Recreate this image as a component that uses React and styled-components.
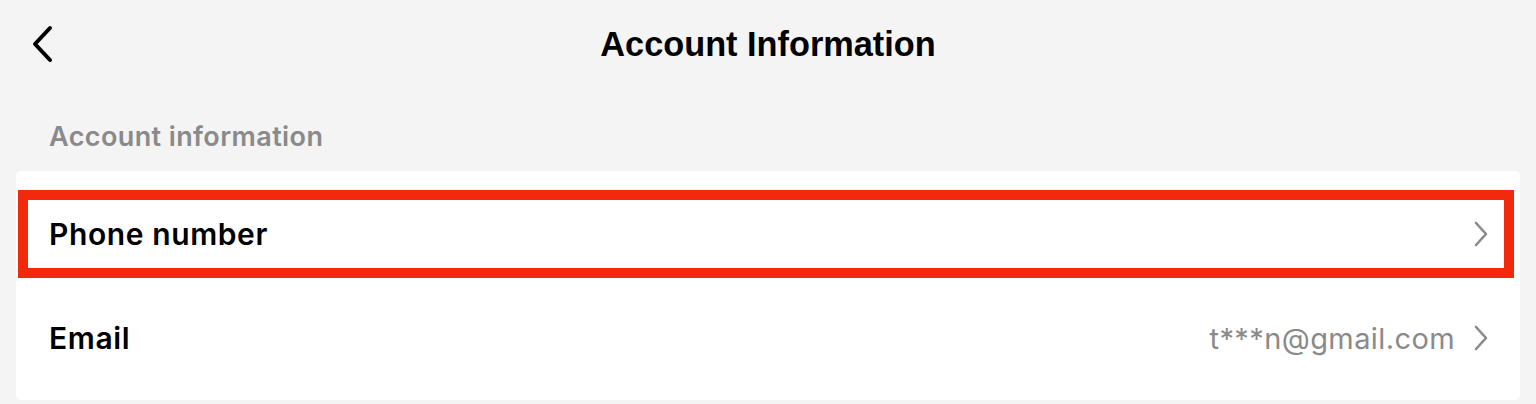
import React from "react";
import styled, { createGlobalStyle } from "styled-components";

const GlobalStyle = createGlobalStyle`
  html, body { margin: 0; padding: 0; background: #f4f4f4; }
  body { font-family: Inter, "Liberation Sans", sans-serif; }
`;

const Page = styled.div`
  width: 1536px;
  height: 404px;
  background: #f4f4f4;
  overflow: hidden;
`;

const Header = styled.header`
  position: relative;
  height: 88px;
  display: flex;
  align-items: center;
  justify-content: center;
`;

const BackButton = styled.button`
  position: absolute;
  left: 26px;
  top: 22px;
  width: 32px;
  height: 44px;
  padding: 0;
  border: none;
  background: none;
  display: flex;
  align-items: center;
  justify-content: center;
  color: #000;
`;

const Title = styled.h1`
  margin: 0;
  font-family: "Liberation Sans", Arial, sans-serif;
  font-weight: 700;
  font-size: 34.3px;
  color: #000;
`;

const SectionLabel = styled.div`
  padding: 14px 0 0 49px;
  height: 69px;
  display: flex;
  align-items: center;
  font-family: Inter, sans-serif;
  font-weight: 600;
  font-size: 27px;
  letter-spacing: 0.4px;
  color: #8a8a8a;
`;

const Card = styled.section`
  margin: 0 16px;
  background: #fff;
  border-radius: 5px;
  padding: 11px 0 10px;
`;

const Row = styled.div`
  position: relative;
  height: 104px;
  display: flex;
  align-items: center;
  padding: 0 31px 0 33px;
`;

const Highlight = styled.div`
  position: absolute;
  left: 2px;
  right: 6px;
  top: 8px;
  bottom: 8px;
  border: 10px solid #f2290c;
  pointer-events: none;
`;

const Label = styled.span`
  flex: 1;
  font-family: Inter, sans-serif;
  font-weight: 600;
  font-size: 30px;
  letter-spacing: 0.6px;
  color: #000;
`;

const Value = styled.span`
  font-family: Inter, sans-serif;
  font-weight: 400;
  font-size: 29px;
  letter-spacing: 0.4px;
  color: #8a8a8a;
  margin-right: 18px;
`;

const Chevron = () => (
  <svg width="16" height="26" viewBox="0 0 16 26" fill="none">
    <path d="M3 2 L13 13 L3 24" stroke="#8a8a8a" strokeWidth="2.6" strokeLinecap="round" strokeLinejoin="round" />
  </svg>
);

const BackIcon = () => (
  <svg width="24" height="38" viewBox="0 0 24 38" fill="none">
    <path d="M20 3 L5 19 L20 35" stroke="#000" strokeWidth="4" strokeLinecap="round" strokeLinejoin="round" />
  </svg>
);

export default function App() {
  return (
    <>
      <GlobalStyle />
      <Page>
        <Header>
          <BackButton aria-label="Back"><BackIcon /></BackButton>
          <Title>Account Information</Title>
        </Header>
        <SectionLabel>Account information</SectionLabel>
        <Card>
          <Row>
            <Label>Phone number</Label>
            <Chevron />
            <Highlight />
          </Row>
          <Row>
            <Label>Email</Label>
            <Value>t***n@gmail.com</Value>
            <Chevron />
          </Row>
        </Card>
      </Page>
    </>
  );
}
